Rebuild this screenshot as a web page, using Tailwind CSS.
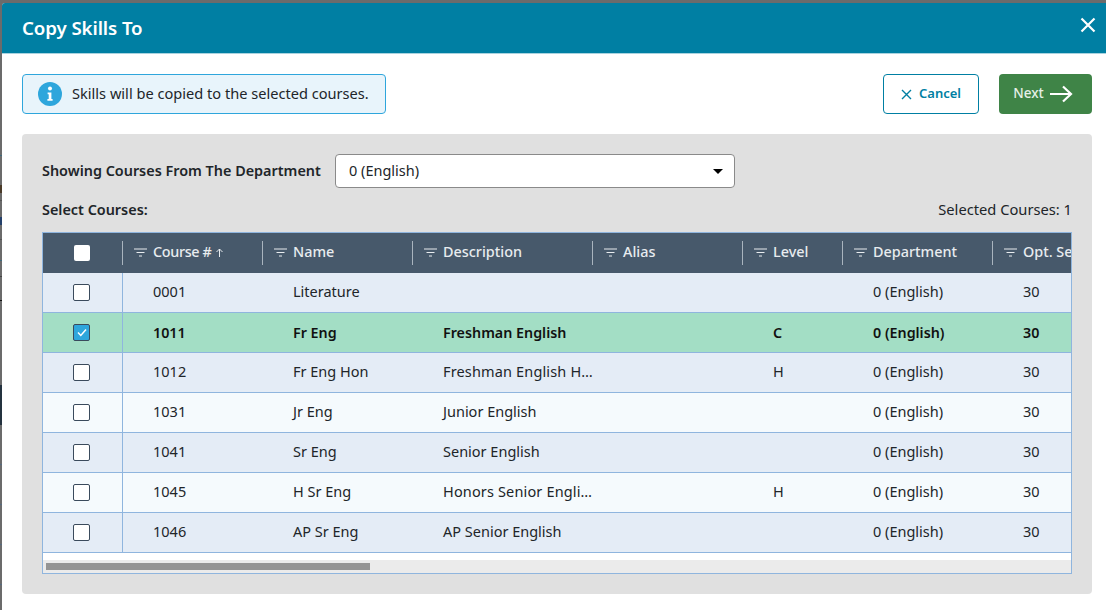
<!DOCTYPE html>
<html lang="en">
<head>
    <meta charset="UTF-8">
    <title>Copy Skills To</title>
    <script src="https://cdn.jsdelivr.net/npm/@tailwindcss/browser@4"></script>
</head>
<body class="h-[610px] w-[1106px] overflow-hidden bg-[#6b6b6b] font-['Noto_Sans',sans-serif] text-[14.5px] text-[#212529]">
    <!-- Page behind the dialog, only a sliver shows at the left edge -->
    <div class="absolute left-0 top-[155px] h-px w-[2px] bg-[#3d6a7c]"></div>
    <div class="absolute left-0 top-[185px] h-[8px] w-[2px] bg-[#4a3a28]"></div>
    <div class="absolute left-0 top-[200px] h-px w-[2px] bg-[#555]"></div>
    <div class="absolute left-0 top-[217px] h-[8px] w-[2px] bg-[#24406a]"></div>
    <div class="absolute left-0 top-[239px] h-px w-[2px] bg-[#555]"></div>
    <div class="absolute left-0 top-[260px] h-px w-[2px] bg-[#3d6a7c]"></div>
    <div class="absolute left-0 top-[276px] h-px w-[2px] bg-[#444]"></div>
    <div class="absolute left-0 top-[300px] h-px w-[2px] bg-[#111]"></div>
    <div class="absolute left-0 top-[385px] h-[40px] w-[2px] bg-[#24323f]"></div>
    <div class="absolute left-0 top-[464px] h-px w-[2px] bg-[#556a80]"></div>
    <div class="absolute left-0 top-[504px] h-px w-[2px] bg-[#556a80]"></div>
    <div class="absolute left-0 top-[544px] h-px w-[2px] bg-[#556a80]"></div>
    <div class="absolute left-0 top-[584px] h-px w-[2px] bg-[#556a80]"></div>

    <div class="h-full pl-[2px] pt-[3px]">
        <div class="flex h-[607px] flex-col overflow-hidden rounded-tl-[3px] bg-white">
            <!-- Header -->
            <div class="flex h-[51px] shrink-0 items-center justify-between border-b border-[#a9d3df] bg-[#007fa3] pl-[20px] pr-[10px] text-white">
                <h1 class="pt-[1px] text-[18.7px] font-semibold tracking-[-0.1px]">Copy Skills To</h1>
                <svg class="mb-[6px] h-[16px] w-[16px]" viewBox="0 0 16 16" fill="none" stroke="white" stroke-width="2.2"><path d="M1.5 1.5l13 13M14.5 1.5l-13 13"/></svg>
            </div>

            <div class="flex flex-col pl-[20px] pr-[14px] pt-[20px]">
                <!-- Actions -->
                <div class="flex h-[40px] items-center justify-between">
                    <div class="flex h-full w-[364px] items-center gap-[10px] rounded-[4px] border border-[#2ea6dc] bg-[#e8f4fb] pl-[15px]">
                        <svg class="h-[24px] w-[24px] shrink-0" viewBox="0 0 24 24"><circle cx="12" cy="12" r="12" fill="#2ea6dc"/><circle cx="12" cy="6.6" r="2" fill="white"/><path d="M9.6 10.4h3.8v6.6h1.2v1.8H9.4V17h1.3v-4.8H9.6z" fill="white"/></svg>
                        <span class="pb-[1px] text-[14.6px] text-[#212529]">Skills will be copied to the selected courses.</span>
                    </div>
                    <div class="flex h-full items-center gap-[20px]">
                        <button class="flex h-full w-[96px] items-center justify-center gap-[7px] rounded-[4px] border border-[#007fa3] bg-white pb-[1px] text-[13px] font-semibold text-[#007fa3]">
                            <svg class="mt-[2px] h-[11px] w-[11px]" viewBox="0 0 11 11" fill="none" stroke="#007fa3" stroke-width="1.4"><path d="M1 1l9 9M10 1l-9 9"/></svg>
                            Cancel
                        </button>
                        <button class="flex h-full w-[93px] items-center justify-center gap-[5px] rounded-[4px] bg-[#3f8447] pb-[1px] pr-[5px] text-[13.5px] font-medium text-[#e6f0e7]">
                            Next
                            <svg class="h-[18px] w-[24px]" viewBox="0 0 24 18" fill="none" stroke="white" stroke-width="2.2"><path d="M1 9h21M14 1.5L22 9l-8 7.5"/></svg>
                        </button>
                    </div>
                </div>

                <!-- Panel -->
                <div class="mt-[20px] flex h-[460px] flex-col rounded-[4px] bg-[#e0e0e0] px-[20px] pt-[20px]">
                    <div class="flex h-[34px] items-center">
                        <label class="w-[293px] pb-[1px] text-[14.4px] font-semibold text-[#212529]">Showing Courses From The Department</label>
                        <div class="flex h-full w-[400px] items-center justify-between rounded-[4px] border border-[#8a8a8a] bg-white pl-[13px] pr-[11px]">
                            <span class="pb-[1px]">0 (English)</span>
                            <span class="h-0 w-0 border-x-[5px] border-t-[5px] border-x-transparent border-t-black"></span>
                        </div>
                    </div>
                    <div class="mt-[12px] flex h-[20px] items-center justify-between">
                        <span class="pb-[1px] text-[14.4px] font-semibold">Select Courses:</span>
                        <span class="pb-[1px] text-[14.7px]">Selected Courses: 1</span>
                    </div>

                    <!-- Table -->
                    <div class="mt-[12px] h-[342px] w-[1030px] overflow-hidden border border-[#8fb5de] bg-white">
                        <div class="flex h-[40px] w-[1150px] items-center bg-[#47596b] text-[14.4px] font-medium text-[#e8ecef]">
                            <div class="flex h-full w-[79px] items-center justify-center pr-[1px]"><span class="h-[16px] w-[16px] rounded-[2px] bg-white"></span></div>
                            <div class="flex h-[24px] w-[140px] items-center gap-[6px] border-l border-[#a9b4be] pb-[2px] pl-[11px]">
                                <svg class="h-[9px] w-[13px]" viewBox="0 0 13 9" fill="none" stroke="#e8ecef"><path d="M0 1h13M2.5 4.5h8M5 8h3"/></svg>
                                <span class="tracking-[-0.35px]">Course #</span>
                                <svg class="-ml-[2px] h-[9px] w-[7px]" viewBox="0 0 7 9" fill="none" stroke="#e8ecef"><path d="M3.5 9V1M.5 4l3-3 3 3"/></svg>
                            </div>
                            <div class="flex h-[24px] w-[150px] items-center gap-[6px] border-l border-[#a9b4be] pb-[2px] pl-[11px]">
                                <svg class="h-[9px] w-[13px]" viewBox="0 0 13 9" fill="none" stroke="#e8ecef"><path d="M0 1h13M2.5 4.5h8M5 8h3"/></svg>
                                <span>Name</span>
                            </div>
                            <div class="flex h-[24px] w-[180px] items-center gap-[6px] border-l border-[#a9b4be] pb-[2px] pl-[11px]">
                                <svg class="h-[9px] w-[13px]" viewBox="0 0 13 9" fill="none" stroke="#e8ecef"><path d="M0 1h13M2.5 4.5h8M5 8h3"/></svg>
                                <span>Description</span>
                            </div>
                            <div class="flex h-[24px] w-[150px] items-center gap-[6px] border-l border-[#a9b4be] pb-[2px] pl-[11px]">
                                <svg class="h-[9px] w-[13px]" viewBox="0 0 13 9" fill="none" stroke="#e8ecef"><path d="M0 1h13M2.5 4.5h8M5 8h3"/></svg>
                                <span>Alias</span>
                            </div>
                            <div class="flex h-[24px] w-[100px] items-center gap-[6px] border-l border-[#a9b4be] pb-[2px] pl-[11px]">
                                <svg class="h-[9px] w-[13px]" viewBox="0 0 13 9" fill="none" stroke="#e8ecef"><path d="M0 1h13M2.5 4.5h8M5 8h3"/></svg>
                                <span>Level</span>
                            </div>
                            <div class="flex h-[24px] w-[150px] items-center gap-[6px] border-l border-[#a9b4be] pb-[2px] pl-[11px]">
                                <svg class="h-[9px] w-[13px]" viewBox="0 0 13 9" fill="none" stroke="#e8ecef"><path d="M0 1h13M2.5 4.5h8M5 8h3"/></svg>
                                <span>Department</span>
                            </div>
                            <div class="flex h-[24px] w-[150px] items-center gap-[6px] border-l border-[#a9b4be] pb-[2px] pl-[11px]">
                                <svg class="h-[9px] w-[13px]" viewBox="0 0 13 9" fill="none" stroke="#e8ecef"><path d="M0 1h13M2.5 4.5h8M5 8h3"/></svg>
                                <span>Opt. Seats</span>
                            </div>
                        </div>

                        <div class="flex h-[40px] w-[1150px] items-center border-b border-[#8fb5de] bg-[#e4ecf6] pb-[2px]">
                            <div class="-mb-[2px] flex h-[40px] w-[80px] items-center justify-center border-r border-[#8fb5de] pr-[2px]"><span class="h-[17px] w-[17px] rounded-[2px] border border-[#3a4a5c] bg-white"></span></div>
                            <div class="w-[140px] pl-[30px]">0001</div>
                            <div class="w-[150px] pl-[30px]">Literature</div>
                            <div class="w-[180px] pl-[30px]"></div>
                            <div class="w-[150px] pl-[30px]"></div>
                            <div class="w-[100px] pl-[30px]"></div>
                            <div class="w-[150px] pl-[30px]">0 (English)</div>
                            <div class="w-[150px] pl-[30px]">30</div>
                        </div>
                        <div class="flex h-[40px] w-[1150px] items-center border-b border-[#8fb5de] bg-[#a3dec5] text-[14.3px] font-semibold text-[#111]">
                            <div class="flex h-full w-[80px] items-center justify-center border-r border-[#8fb5de] pr-[2px]">
                                <span class="flex h-[17px] w-[17px] items-center justify-center rounded-[2px] border border-[#3a4a5c] bg-[#2ea6dc]">
                                    <svg class="h-[9px] w-[10px]" viewBox="0 0 10 9" fill="none" stroke="white" stroke-width="1.5"><path d="M1 4.5l2.8 3L9 1.5"/></svg>
                                </span>
                            </div>
                            <div class="w-[140px] pl-[30px]">1011</div>
                            <div class="w-[150px] pl-[30px]">Fr Eng</div>
                            <div class="w-[180px] pl-[30px]">Freshman English</div>
                            <div class="w-[150px] pl-[30px]"></div>
                            <div class="w-[100px] pl-[30px]">C</div>
                            <div class="w-[150px] pl-[30px]">0 (English)</div>
                            <div class="w-[150px] pl-[30px]">30</div>
                        </div>
                        <div class="flex h-[40px] w-[1150px] items-center border-b border-[#8fb5de] bg-[#e4ecf6] pb-[2px]">
                            <div class="-mb-[2px] flex h-[40px] w-[80px] items-center justify-center border-r border-[#8fb5de] pr-[2px]"><span class="h-[17px] w-[17px] rounded-[2px] border border-[#3a4a5c] bg-white"></span></div>
                            <div class="w-[140px] pl-[30px]">1012</div>
                            <div class="w-[150px] pl-[30px]">Fr Eng Hon</div>
                            <div class="w-[180px] truncate pl-[30px] tracking-[0.15px]">Freshman English Honors</div>
                            <div class="w-[150px] pl-[30px]"></div>
                            <div class="w-[100px] pl-[30px]">H</div>
                            <div class="w-[150px] pl-[30px]">0 (English)</div>
                            <div class="w-[150px] pl-[30px]">30</div>
                        </div>
                        <div class="flex h-[40px] w-[1150px] items-center border-b border-[#8fb5de] bg-[#f5fafd] pb-[2px]">
                            <div class="-mb-[2px] flex h-[40px] w-[80px] items-center justify-center border-r border-[#8fb5de] pr-[2px]"><span class="h-[17px] w-[17px] rounded-[2px] border border-[#3a4a5c] bg-white"></span></div>
                            <div class="w-[140px] pl-[30px]">1031</div>
                            <div class="w-[150px] pl-[30px]">Jr Eng</div>
                            <div class="w-[180px] pl-[30px]">Junior English</div>
                            <div class="w-[150px] pl-[30px]"></div>
                            <div class="w-[100px] pl-[30px]"></div>
                            <div class="w-[150px] pl-[30px]">0 (English)</div>
                            <div class="w-[150px] pl-[30px]">30</div>
                        </div>
                        <div class="flex h-[40px] w-[1150px] items-center border-b border-[#8fb5de] bg-[#e4ecf6] pb-[2px]">
                            <div class="-mb-[2px] flex h-[40px] w-[80px] items-center justify-center border-r border-[#8fb5de] pr-[2px]"><span class="h-[17px] w-[17px] rounded-[2px] border border-[#3a4a5c] bg-white"></span></div>
                            <div class="w-[140px] pl-[30px]">1041</div>
                            <div class="w-[150px] pl-[30px]">Sr Eng</div>
                            <div class="w-[180px] pl-[30px]">Senior English</div>
                            <div class="w-[150px] pl-[30px]"></div>
                            <div class="w-[100px] pl-[30px]"></div>
                            <div class="w-[150px] pl-[30px]">0 (English)</div>
                            <div class="w-[150px] pl-[30px]">30</div>
                        </div>
                        <div class="flex h-[40px] w-[1150px] items-center border-b border-[#8fb5de] bg-[#f5fafd] pb-[2px]">
                            <div class="-mb-[2px] flex h-[40px] w-[80px] items-center justify-center border-r border-[#8fb5de] pr-[2px]"><span class="h-[17px] w-[17px] rounded-[2px] border border-[#3a4a5c] bg-white"></span></div>
                            <div class="w-[140px] pl-[30px]">1045</div>
                            <div class="w-[150px] pl-[30px]">H Sr Eng</div>
                            <div class="w-[180px] truncate pl-[30px] tracking-[0.15px]">Honors Senior English Lit</div>
                            <div class="w-[150px] pl-[30px]"></div>
                            <div class="w-[100px] pl-[30px]">H</div>
                            <div class="w-[150px] pl-[30px]">0 (English)</div>
                            <div class="w-[150px] pl-[30px]">30</div>
                        </div>
                        <div class="flex h-[40px] w-[1150px] items-center border-b border-[#8fb5de] bg-[#e4ecf6] pb-[2px]">
                            <div class="-mb-[2px] flex h-[40px] w-[80px] items-center justify-center border-r border-[#8fb5de] pr-[2px]"><span class="h-[17px] w-[17px] rounded-[2px] border border-[#3a4a5c] bg-white"></span></div>
                            <div class="w-[140px] pl-[30px]">1046</div>
                            <div class="w-[150px] pl-[30px]">AP Sr Eng</div>
                            <div class="w-[180px] pl-[30px]">AP Senior English</div>
                            <div class="w-[150px] pl-[30px]"></div>
                            <div class="w-[100px] pl-[30px]"></div>
                            <div class="w-[150px] pl-[30px]">0 (English)</div>
                            <div class="w-[150px] pl-[30px]">30</div>
                        </div>

                        <!-- Scrollbar -->
                        <div class="mt-[7px] h-[13px] bg-[#ebebeb] px-[3px] py-[3px]">
                            <div class="h-[7px] w-[324px] bg-[#949494]"></div>
                        </div>
                    </div>
                </div>
            </div>
        </div>
    </div>
</body>
</html>
